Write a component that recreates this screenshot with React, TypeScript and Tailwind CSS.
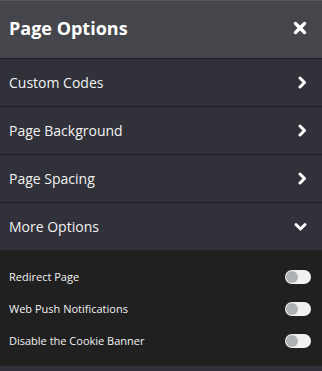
const font = { fontFamily: '"Open Sans", "Noto Sans", sans-serif' };

function ChevronRight() {
  return (
    <svg width="10" height="13" viewBox="0 0 10 13" fill="none" stroke="white" strokeWidth="3" strokeLinecap="round" strokeLinejoin="round">
      <path d="M3 2l4.5 4.5L3 11" />
    </svg>
  );
}

function ChevronDown() {
  return (
    <svg width="13" height="10" viewBox="0 0 13 10" fill="none" stroke="white" strokeWidth="3" strokeLinecap="round" strokeLinejoin="round">
      <path d="M2 2.5l4.5 4.5L11 2.5" />
    </svg>
  );
}

function CloseIcon() {
  return (
    <svg width="14" height="14" viewBox="0 0 14 14" fill="none" stroke="white" strokeWidth="3.4" strokeLinecap="round">
      <path d="M2.5 2.5l9 9M11.5 2.5l-9 9" />
    </svg>
  );
}

function Toggle() {
  return (
    <div className="flex h-[14px] w-[26px] items-center rounded-full bg-[#f1f1f1] px-[1px]">
      <div className="h-[12px] w-[12px] rounded-full bg-[#aeb1b6]" />
    </div>
  );
}

const menu = ["Custom Codes", "Page Background", "Page Spacing"];
const toggles = ["Redirect Page", "Web Push Notifications", "Disable the Cookie Banner"];

export default function App() {
  return (
    <div className="flex h-[371px] w-[322px] flex-col bg-[#303139] text-white" style={font}>
      <div className="flex h-[59px] shrink-0 items-center justify-between border-t border-b border-t-[#56575c] border-b-[#1d1e22] bg-[#45464b] pb-[3px] pl-[9px] pr-[15px]">
        <h1 className="text-[18px] font-bold leading-none">Page Options</h1>
        <CloseIcon />
      </div>
      {menu.map((m) => (
        <div
          key={m}
          className="flex h-[48px] shrink-0 items-center justify-between border-b border-[#1f2025] pl-[9px] pr-[15px] text-[14px] text-[#f2f2f2]"
        >
          <span>{m}</span>
          <ChevronRight />
        </div>
      ))}
      <div className="flex h-[47px] shrink-0 items-center justify-between pl-[9px] pr-[15px] text-[14px] text-[#f2f2f2]">
        <span>More Options</span>
        <ChevronDown />
      </div>
      <div className="flex h-[116px] shrink-0 flex-col bg-[#202020] pt-[11px] pb-[9px] pl-[9px] pr-[11px]">
        {toggles.map((t) => (
          <div key={t} className="flex h-[32px] items-center justify-between text-[11px] text-[#f2f2f2]">
            <span>{t}</span>
            <Toggle />
          </div>
        ))}
      </div>
      <div className="flex-1 bg-[#303139]" />
    </div>
  );
}
